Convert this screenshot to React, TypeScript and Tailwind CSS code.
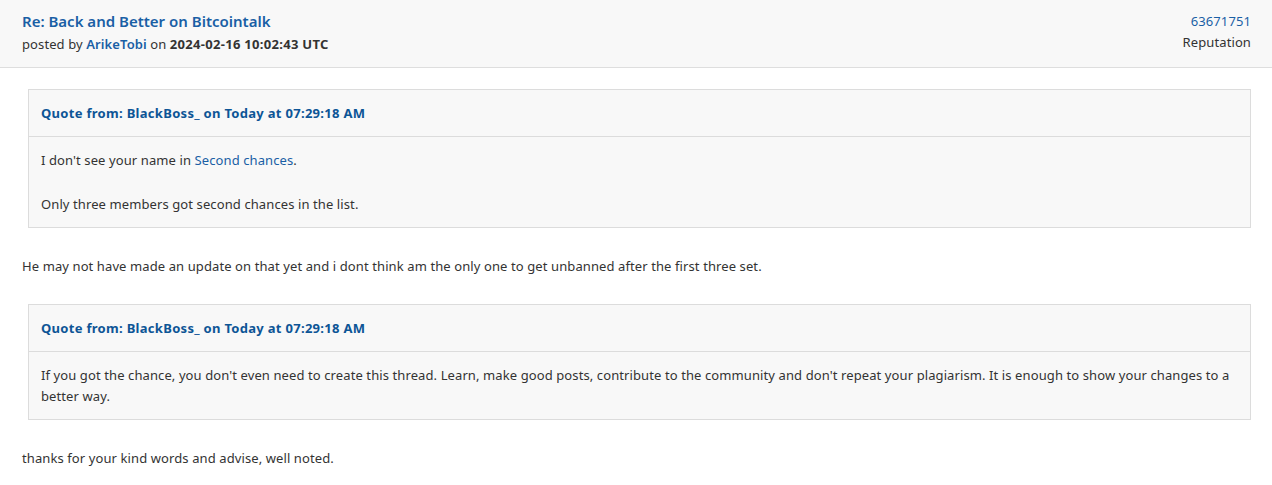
import React from 'react';

const Quote: React.FC<{ header: string; children: React.ReactNode }> = ({ header, children }) => (
  <div className="ml-[6px] border border-[#dcdcdc] bg-[#f8f8f8]">
    <div className="border-b border-[#dcdcdc] px-3 pt-[14px] pb-[13px] text-[13px] leading-[19px] font-bold tracking-[0.3px] text-[#0d5596]">
      {header}
    </div>
    <div className="px-3 pt-[13px] pb-[12px] text-[13px] leading-[21px] text-[#333]">{children}</div>
  </div>
);

export default function App() {
  return (
    <div className="min-h-[485px] bg-white font-['Noto_Sans',sans-serif] tracking-[0.1px] text-[#333]">
      {/* Post header */}
      <div className="flex h-[68px] items-start justify-between border-b border-[#dedede] bg-[#f8f8f8] pl-[22px] pr-[21px] pt-[10px]">
        <div className="flex flex-col">
          <a className="text-[15px] leading-[22px] font-semibold tracking-normal text-[#1a5fa5]">Re: Back and Better on Bitcointalk</a>
          <div className="mt-[1px] text-[13px] leading-[22px]">
            posted by <span className="font-semibold text-[#1a5fa5]">ArikeTobi</span> on{' '}
            <span className="font-bold tracking-[0.3px]">2024-02-16 10:02:43 UTC</span>
          </div>
        </div>
        <div className="flex flex-col items-end text-[13px] leading-[22px]">
          <a className="text-[#1a5fa5]">63671751</a>
          <span className="-mt-[1px]">Reputation</span>
        </div>
      </div>

      {/* Post body */}
      <div className="pl-[22px] pr-[21px] pt-[21px] pb-4 text-[13px] leading-[21px]">
        <Quote header="Quote from: BlackBoss_ on Today at 07:29:18 AM">
          <p>
            I don't see your name in <a className="text-[#1a5fa5]">Second chances</a>.
          </p>
          <p className="mt-[23px]">Only three members got second chances in the list.</p>
        </Quote>
        <p className="mt-[28px] mb-[27px]">
          He may not have made an update on that yet and i dont think am the only one to get unbanned after the first three set.
        </p>
        <Quote header="Quote from: BlackBoss_ on Today at 07:29:18 AM">
          <p>
            If you got the chance, you don't even need to create this thread. Learn, make good posts, contribute to the community and don't repeat your plagiarism. It is enough to show your changes to a better way.
          </p>
        </Quote>
        <p className="mt-[28px]">thanks for your kind words and advise, well noted.</p>
      </div>
    </div>
  );
}
